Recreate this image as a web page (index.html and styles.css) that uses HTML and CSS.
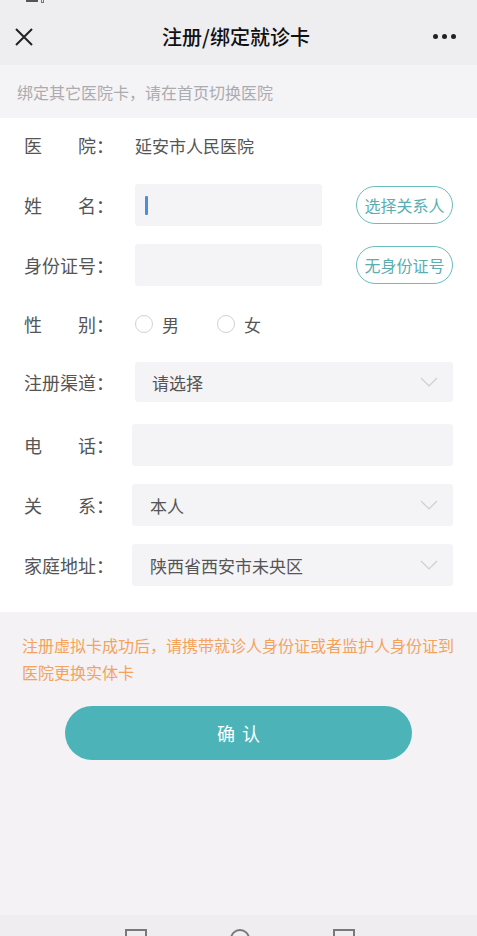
FILE: index.html
```html
<!DOCTYPE html>
<html lang="zh-CN">
<head>
<meta charset="utf-8">
<title>注册/绑定就诊卡</title>
<link rel="stylesheet" href="styles.css">
</head>
<body>
<div class="page">
  <header class="nav">
    <div class="status"><span class="st-a"></span><span class="st-b"></span></div>
    <div class="nav-bar">
      <svg class="close" width="18" height="18" viewBox="0 0 18 18"><path d="M1 1L17 17M17 1L1 17" stroke="#222" stroke-width="2" fill="none"/></svg>
      <h1 class="title">注册/绑定就诊卡</h1>
      <div class="more"><span></span><span></span><span></span></div>
    </div>
  </header>
  <div class="notice">绑定其它医院卡，请在首页切换医院</div>
  <form class="form">
    <div class="row">
      <div class="label"><span class="lt"><span>医</span><span>院</span></span><span class="colon">：</span></div>
      <div class="value">延安市人民医院</div>
    </div>
    <div class="row">
      <div class="label"><span class="lt"><span>姓</span><span>名</span></span><span class="colon">：</span></div>
      <div class="input short"><span class="caret"></span></div>
      <button type="button" class="pill">选择关系人</button>
    </div>
    <div class="row">
      <div class="label"><span class="lt"><span>身份证号</span></span><span class="colon">：</span></div>
      <div class="input short"></div>
      <button type="button" class="pill">无身份证号</button>
    </div>
    <div class="row row-radio">
      <div class="label"><span class="lt"><span>性</span><span>别</span></span><span class="colon">：</span></div>
      <div class="radios">
        <label class="radio"><span class="circle"></span>男</label>
        <label class="radio"><span class="circle"></span>女</label>
      </div>
    </div>
    <div class="row row-select">
      <div class="label"><span class="lt"><span>注册渠道</span></span><span class="colon">：</span></div>
      <div class="select sm"><span>请选择</span><svg class="chev" width="18" height="10" viewBox="0 0 18 10"><path d="M1 1L9 9L17 1" stroke="#cfcfd3" stroke-width="1.2" fill="none"/></svg></div>
    </div>
    <div class="row wide">
      <div class="label"><span class="lt"><span>电</span><span>话</span></span><span class="colon">：</span></div>
      <div class="input full"></div>
    </div>
    <div class="row wide">
      <div class="label"><span class="lt"><span>关</span><span>系</span></span><span class="colon">：</span></div>
      <div class="select"><span>本人</span><svg class="chev" width="18" height="10" viewBox="0 0 18 10"><path d="M1 1L9 9L17 1" stroke="#cfcfd3" stroke-width="1.2" fill="none"/></svg></div>
    </div>
    <div class="row wide">
      <div class="label"><span class="lt"><span>家庭地址</span></span><span class="colon">：</span></div>
      <div class="select"><span>陕西省西安市未央区</span><svg class="chev" width="18" height="10" viewBox="0 0 18 10"><path d="M1 1L9 9L17 1" stroke="#cfcfd3" stroke-width="1.2" fill="none"/></svg></div>
    </div>
  </form>
  <p class="tip">注册虚拟卡成功后，请携带就诊人身份证或者监护人身份证到医院更换实体卡</p>
  <div class="actions"><button type="button" class="confirm">确认</button></div>
  <div class="spacer"></div>
  <footer class="sysbar">
    <svg width="22" height="10" viewBox="0 0 22 10"><path d="M1 9V1H21V9" stroke="#7a787c" stroke-width="2" fill="none"/></svg>
    <svg width="22" height="10" viewBox="0 0 22 10"><path d="M2 10A9 9 0 0 1 20 10" stroke="#7a787c" stroke-width="2" fill="none"/></svg>
    <svg width="22" height="10" viewBox="0 0 22 10"><path d="M1 9V1H21V9" stroke="#7a787c" stroke-width="2" fill="none"/></svg>
  </footer>
</div>
</body>
</html>
```
FILE: styles.css
```css
* { box-sizing: border-box; }
html, body { margin: 0; padding: 0; }
body {
  font-family: "Noto Sans CJK SC", "Noto Sans", sans-serif;
  background: #f4f2f5;
  color: #555;
}
.page {
  width: 477px;
  height: 936px;
  display: flex;
  flex-direction: column;
  overflow: hidden;
}
.nav { background: #eeedf0; height: 65px; }
.status { height: 4px; display: flex; gap: 3px; padding-left: 26px; }
.st-a { width: 12px; height: 2px; background: #555; }
.st-b { width: 3px; height: 3px; border: 1px solid #777; border-top: none; }
.nav-bar {
  height: 61px;
  padding: 4px 21px 0 15px;
  display: flex;
  align-items: center;
  justify-content: space-between;
}
.close { display: block; }
.title {
  margin: 0;
  font-size: 20px;
  font-weight: 500;
  color: #111;
  padding-left: 6px;
}
.more { display: flex; gap: 4px; }
.more span { width: 5px; height: 5px; border-radius: 50%; background: #222; }
.notice {
  height: 53px;
  background: #f4f3f6;
  padding-left: 17px;
  display: flex;
  align-items: center;
  font-size: 16px;
  color: #acabaf;
}
.form {
  margin: 0;
  background: #fff;
  padding: 6px 24px 26px 24px;
  display: flex;
  flex-direction: column;
  gap: 18px;
}
.row {
  height: 42px;
  display: flex;
  align-items: center;
}
.row-radio { height: 40px; }
.row-select { margin-bottom: 4px; height: 40px; }
.label {
  width: 111px;
  flex: none;
  display: flex;
  font-size: 18px;
  color: #555;
}
.wide .label { width: 108px; }
.lt { width: 72px; display: flex; justify-content: space-between; }
.colon { width: 18px; }
.value { font-size: 17px; color: #555; }
.input {
  height: 42px;
  background: #f4f3f6;
  border-radius: 3px;
  display: flex;
  align-items: center;
  padding-left: 10px;
}
.input.short { width: 187px; }
.input.full { flex: 1; }
.caret { width: 3px; height: 19px; background: #4d8ed6; border-radius: 1px; }
.pill {
  margin-left: auto;
  width: 97px;
  height: 38px;
  border: 1px solid #6bbcbc;
  border-radius: 19px;
  background: #fff;
  color: #5aadb1;
  font-family: inherit;
  font-size: 16px;
  padding: 0;
}
.radios { display: flex; gap: 38px; font-size: 17px; color: #555; }
.radio { display: flex; align-items: center; gap: 9px; }
.circle {
  width: 18px;
  height: 18px;
  border: 1px solid #d2d2d6;
  border-radius: 50%;
}
.select {
  flex: 1;
  height: 42px;
  background: #f4f3f6;
  border-radius: 3px;
  display: flex;
  align-items: center;
  justify-content: space-between;
  padding: 0 15px 0 18px;
  font-size: 17px;
  color: #555;
}
.select.sm { height: 40px; padding-left: 17px; }
.chev { display: block; }
.tip {
  margin: 0;
  padding: 20px 20px 0 22px;
  font-size: 16px;
  line-height: 27px;
  color: #f4a35c;
}
.actions { padding: 20px 65px 0 65px; }
.confirm {
  width: 100%;
  height: 54px;
  border: none;
  border-radius: 27px;
  background: #4cb4b9;
  color: #fff;
  font-family: inherit;
  font-size: 18px;
  letter-spacing: 7px;
  text-indent: 7px;
  padding: 0;
}
.spacer { flex: 1; }
.sysbar {
  height: 21px;
  background: #efedf0;
  display: flex;
  padding: 14px 0 0 125px;
  gap: 82px;
  align-items: flex-start;
}
.sysbar svg { display: block; }
```
